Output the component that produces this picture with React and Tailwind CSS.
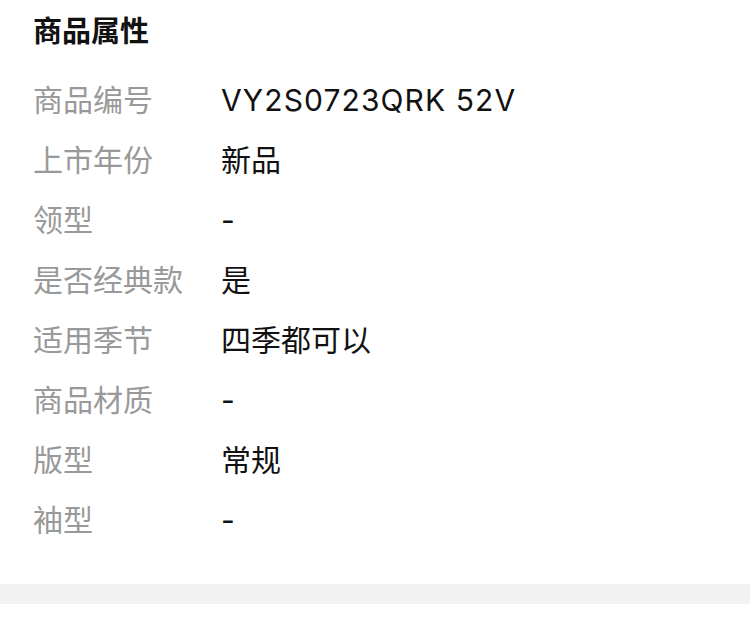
import React from 'react';

const ATTRS = [
  ['商品编号', 'VY2S0723QRK 52V', true],
  ['上市年份', '新品'],
  ['领型', '-'],
  ['是否经典款', '是'],
  ['适用季节', '四季都可以'],
  ['商品材质', '-'],
  ['版型', '常规'],
  ['袖型', '-'],
];

export default function App() {
  return (
    <div
      className="w-[750px] h-[632px] bg-white overflow-hidden"
      style={{ fontFamily: 'Inter, "Noto Sans CJK SC", sans-serif' }}
    >
      <div className="px-[33px] pb-[34px]">
        <div className="h-[64px] flex items-center text-[29px] font-bold text-[#111]">
          商品属性
        </div>
        <div className="pt-[6px]">
          {ATTRS.map(([label, value, latin]) => (
            <div key={label} className="h-[60px] flex items-center text-[30px] leading-none">
              <span className="w-[188px] shrink-0 text-[#999999]">{label}</span>
              <span className={latin ? 'text-[#111] tracking-[1.1px]' : 'text-[#111]'}>{value}</span>
            </div>
          ))}
        </div>
      </div>
      <div className="h-[20px] bg-[#f2f2f2]" />
    </div>
  );
}
